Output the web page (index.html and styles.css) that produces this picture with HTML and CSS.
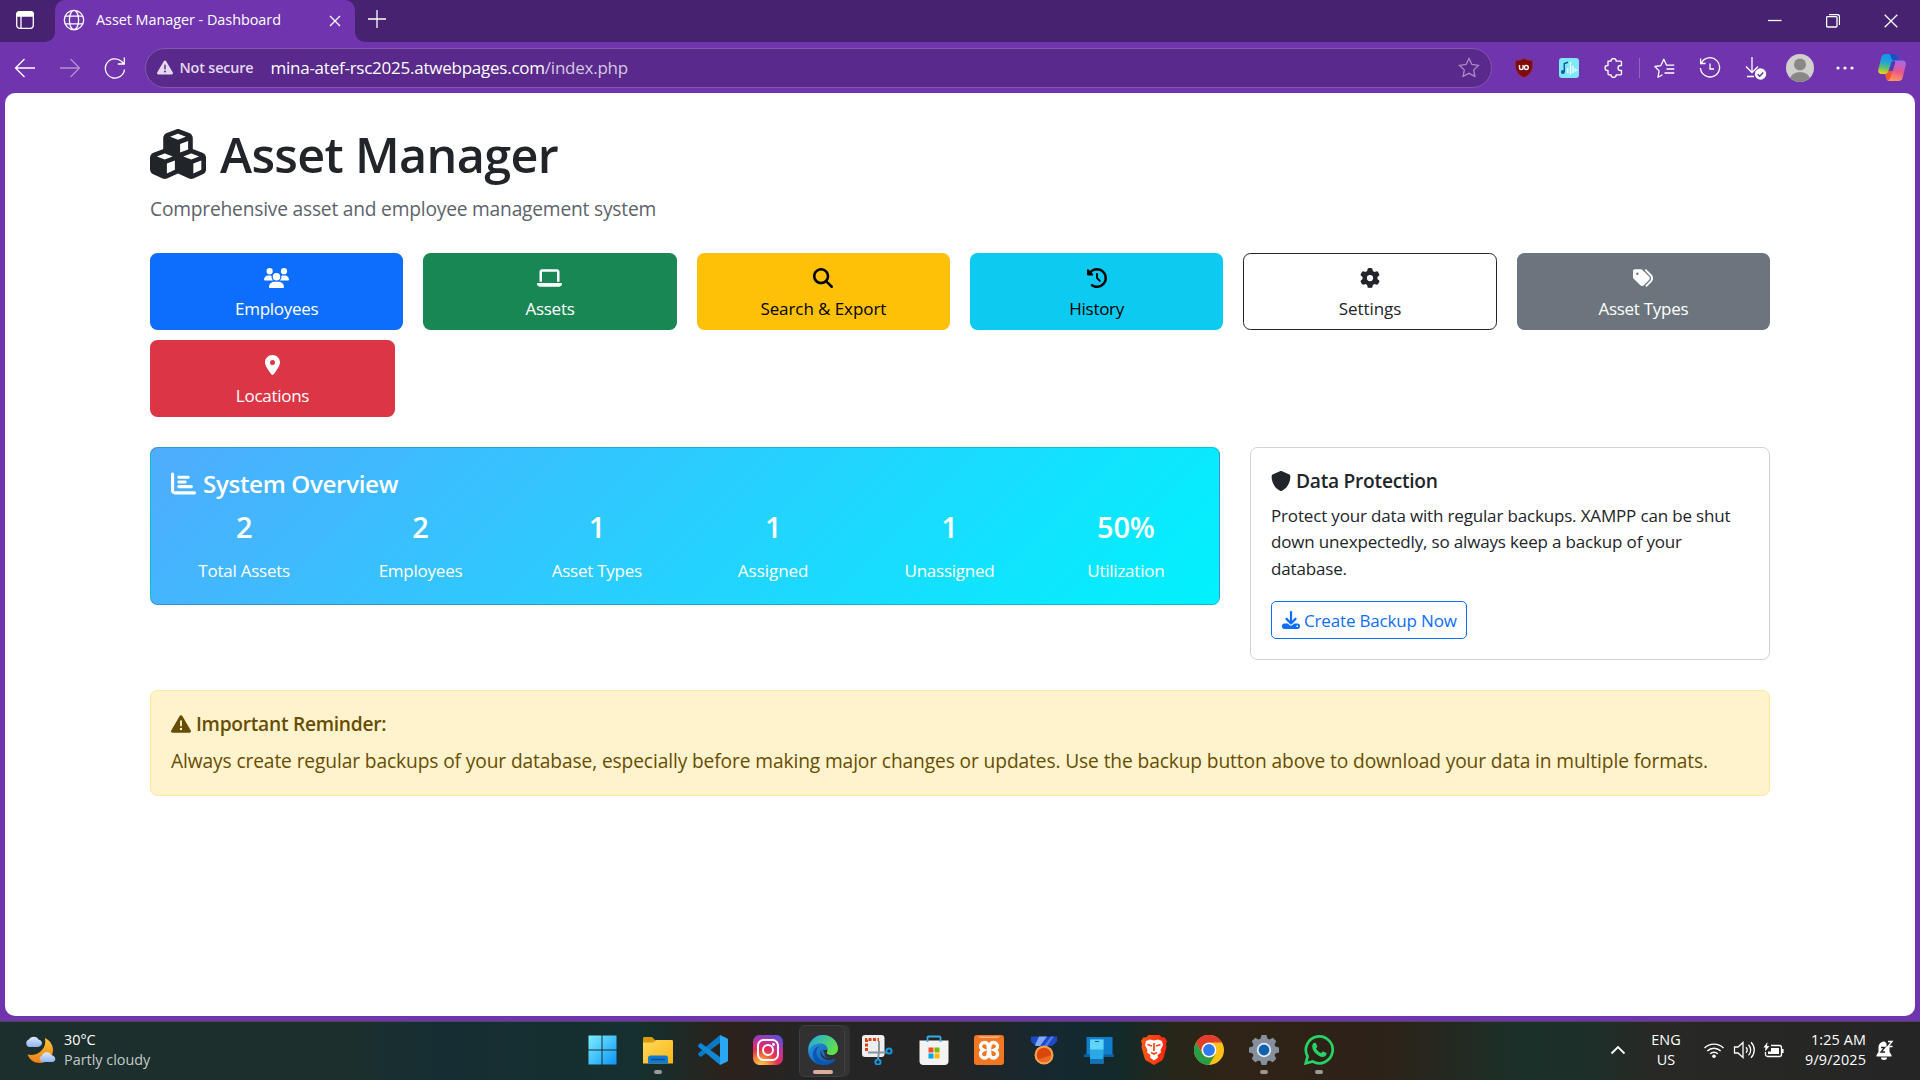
FILE: index.html
```html
<!DOCTYPE html>
<html lang="en">
<head>
<meta charset="utf-8">
<title>Asset Manager - Dashboard</title>
<link rel="stylesheet" href="styles.css">
</head>
<body>
<div class="screen">
  <header class="tabstrip">
    <div class="strip-left"><svg class="ic" width="20" height="20" viewBox="0 0 20 20"><rect x="1.7" y="1.7" width="16.600" height="16.600" rx="3"/><path d="M1.700 6V4.500a2.800 2.800 0 0 1 2.800-2.800h11a2.800 2.800 0 0 1 2.800 2.800V6z" fill="#fff"/><path d="M6 6v12"/></svg></div>
    <div class="tab">
      <svg class="ic" width="22" height="22" viewBox="0 0 22 22"><circle cx="11" cy="11" r="9.700"/><ellipse cx="11" cy="11" rx="4.600" ry="9.700"/><path d="M2.200 7.200h17.600M2.200 14.800h17.600"/></svg>
      <span class="tab-title">Asset Manager - Dashboard</span>
      <svg class="ic tab-close" width="12" height="12" viewBox="0 0 12 12"><path d="M1 1l10 10M11 1L1 11"/></svg>
    </div>
    <div class="strip-right">
      <svg class="ic" width="20" height="20" viewBox="0 0 20 20"><path d="M10 1v18M1 10h18"/></svg>
      <div class="winbtns">
        <span><svg class="ic" width="14" height="14" viewBox="0 0 14 14"><path d="M0 6.500h13.500"/></svg></span>
        <span><svg class="ic" width="14" height="14" viewBox="0 0 14 14"><rect x=".600" y="2.600" width="10.400" height="10.400" rx="1"/><path d="M3 .6h8.500a2 2 0 0 1 2 2V11"/></svg></span>
        <span><svg class="ic" width="14" height="14" viewBox="0 0 14 14"><path d="M.7.700l12.600 12.600M13.300.700L.700 13.300"/></svg></span>
      </div>
    </div>
  </header>
  <nav class="toolbar">
    <span class="tb"><svg class="ic" width="22" height="20" viewBox="0 0 22 20"><path d="M21 10H2M10.500 1L1.500 10l9 9"/></svg></span>
    <span class="tb dim"><svg class="ic" width="22" height="20" viewBox="0 0 22 20"><path d="M1 10h19M11.500 1l9 9-9 9"/></svg></span>
    <span class="tb"><svg class="ic" width="22" height="24" viewBox="0 0 22 24"><path d="M20.500 13.500A9.600 9.600 0 1 1 17.300 5.200L20.300 8M20.300 1.500V8h-6.500"/></svg></span>
    <div class="omnibox">
      <svg width="16" height="15" viewBox="0 0 512 470" fill="#e3d8ef"><path transform="translate(0 -22)" d="M256 32c14.200 0 27.300 7.500 34.500 19.800l216 368c7.300 12.400 7.300 27.700.2 40.100S486.300 480 472 480H40c-14.300 0-27.600-7.700-34.700-20.100s-7-27.800.2-40.100l216-368C228.700 39.500 241.800 32 256 32zm0 128c-13.300 0-24 10.700-24 24V296c0 13.300 10.700 24 24 24s24-10.700 24-24V184c0-13.300-10.700-24-24-24zm32 224a32 32 0 1 0-64 0 32 32 0 1 0 64 0z"/></svg>
      <span class="notsecure">Not secure</span>
      <span class="url">mina-atef-rsc2025.atwebpages.com<span class="path">/index.php</span></span>
      <svg class="ic star" width="22" height="21" viewBox="0 0 22 21"><path d="M11 1.500l2.900 6 6.600.9-4.800 4.500 1.200 6.500L11 16.300l-5.900 3.100 1.200-6.500L1.500 8.400l6.600-.9z"/></svg>
    </div>
    <div class="exts">
      <span class="tb"><svg width="18" height="20" viewBox="0 0 18 20"><path d="M9 .5C6.500 2 3.500 2.700.500 2.700c0 8 0 12.800 8.500 16.800 8.500-4 8.500-8.800 8.500-16.800C14.500 2.700 11.500 2 9 .500z" fill="#800b0b" stroke="#a02a2a" stroke-width=".5"/><path d="M4.500 7v2.800a1.800 1.800 0 0 0 3.600 0V7" fill="none" stroke="#fff" stroke-width="1.400"/><circle cx="11.300" cy="9.500" r="2" fill="none" stroke="#fff" stroke-width="1.400"/></svg></span>
      <span class="tb"><svg width="20" height="20" viewBox="0 0 20 20"><rect width="20" height="20" rx="3" fill="#7fe9fb"/><path d="M5.300 14V5.500l3.700-1.300" fill="none" stroke="#0b5d9c" stroke-width="1.500"/><circle cx="3.900" cy="14" r="2" fill="#0b5d9c"/><path d="M8.700 10v5M11.500 4v12.500M14 8v7M16.300 10.500v3M18 11.500v1.500" stroke="#fff" stroke-width="1.300"/></svg></span>
      <span class="tb"><svg class="ic" width="20" height="20" viewBox="0 0 20 20"><path d="M4 3.200H7a2.600 2.600 0 0 1 5.200 0h4.300q1 0 1 1v3.300h-1a2.500 2.500 0 0 0 0 5h1v3.300q0 1-1 1H12.200a2.600 2.600 0 0 1-5.200 0H5q-1 0-1-1v-3.300H3.500a2.500 2.500 0 0 1 0-5H4z" stroke-linejoin="round"/></svg></span>
      <span class="sep"></span>
      <span class="tb"><svg class="ic" width="21" height="20" viewBox="0 0 21 20"><path d="M8.500 16.800L4 19.200l1.100-6.300L.9 8.500l6-.9L9.800 1.300l2.800 5.900h7.700M12.500 11h7.800M10.500 15h9.800" stroke-linejoin="round"/></svg></span>
      <span class="tb"><svg class="ic" width="22" height="22" viewBox="0 0 22 22"><path d="M2.300 6.200A9.600 9.600 0 1 1 1.400 11M1.600 1.500v5h5M11 6.500V12h4"/></svg></span>
      <span class="tb"><svg class="ic" width="24" height="24" viewBox="0 0 24 24"><path d="M9 1v15M3 10.500l6 6 6-6M4 20.500h7"/><circle cx="17.500" cy="18" r="5.700" fill="#fff" stroke="none"/><path d="M14.700 18.200l2 2 3.600-3.800" stroke="#6a30a8" stroke-width="1.500"/></svg></span>
      <span class="tb"><svg width="28" height="28" viewBox="0 0 28 28"><clipPath id="av"><circle cx="14" cy="14" r="14"/></clipPath><g clip-path="url(#av)"><path fill="#d2d0ce" d="M0 0h28v28H0z"/><circle cx="14" cy="10.500" r="6" fill="#8a8886"/><ellipse cx="14" cy="25.500" rx="10" ry="7.500" fill="#8a8886"/></g></svg></span>
      <span class="tb"><svg width="18" height="4" viewBox="0 0 18 4" fill="#fff"><circle cx="2" cy="2" r="1.600"/><circle cx="9" cy="2" r="1.600"/><circle cx="16" cy="2" r="1.600"/></svg></span>
      <span class="tb copilot"><svg width="28" height="27" viewBox="0 0 28 27"><defs><linearGradient id="c1" x1=".5" y1="0" x2=".3" y2="1"><stop offset="0" stop-color="#1592ea"/><stop offset=".4" stop-color="#1fa3dc"/><stop offset=".7" stop-color="#5cc06a"/><stop offset="1" stop-color="#f2cf1c"/></linearGradient><linearGradient id="c2" x1=".6" y1="0" x2=".4" y2="1"><stop offset="0" stop-color="#a66be8"/><stop offset=".5" stop-color="#e8568f"/><stop offset="1" stop-color="#fd9a57"/></linearGradient></defs><path d="M7 0h9.500c2 0 2.800 1.300 3.300 3l1 3.500h-4.300c-2 0-3 1-3.600 3L10.500 17c-.5 1.700-1.500 3-3.500 3H3.500C.8 20-.3 18 .3 15.500l3-12C3.900 1.300 5 0 7 0z" fill="url(#c1)"/><path d="M12 0h4.500c2 0 2.800 1.300 3.300 3l1 3.500h-4.300L14 6z" fill="#1b4fc4"/><path d="M21 27h-9.500c-2 0-2.800-1.300-3.300-3l-.9-4c2 0 2.900-1.300 3.400-3l2.300-7.500c.6-2 1.500-3 3.500-3h8c2.700 0 3.800 2 3.200 4.500l-3 12.500C24.100 25.700 23 27 21 27z" fill="url(#c2)"/><path d="M16.500 6.500c-2 0-3 1-3.500 3L10.700 17h4L17 9.500c.5-1.500 0-3-.5-3z" fill="#4a3fb8"/><path d="M7.300 20c2 0 3-1.300 3.500-3h3.700L13 22c-.9 3-2 4.500-3.500 4-.7-.5-1-1.200-1.300-2z" fill="#f4552f"/></svg></span>
    </div>
  </nav>

  <main class="page">
    <h1><svg width="56" height="50" viewBox="0 0 576 512"><path d="M290.8 48.600l78.400 29.700L288 109.500 206.800 78.300l78.400-29.700c1.800-.7 3.800-.7 5.700 0zM136 92.500V204.700c-1.300.4-2.600.8-3.900 1.300l-96 36.400C14.400 250.600 0 271.500 0 294.700V413.900c0 22.200 13.100 42.300 33.500 51.300l96 42.200c14.400 6.300 30.700 6.300 45.100 0L288 457.500l113.500 49.900c14.400 6.300 30.700 6.300 45.100 0l96-42.200c20.300-8.900 33.500-29.100 33.500-51.300V294.700c0-23.300-14.400-44.100-36.100-52.400l-96-36.400c-1.300-.5-2.600-.9-3.900-1.300V92.500c0-23.300-14.400-44.100-36.100-52.400l-96-36.400c-12.800-4.800-26.900-4.800-39.700 0l-96 36.400C150.400 48.400 136 69.300 136 92.500zM392 210.600l-82.400 31.200V152.600L392 121v89.600zM154.800 250.900l78.400 29.700L152 311.700 70.800 280.600l78.400-29.700c1.800-.7 3.800-.7 5.700 0zm18.800 204.400V354.800L256 323.200v95.900l-82.400 36.200zM421.200 250.900c1.800-.7 3.800-.7 5.700 0l78.400 29.700L424 311.700l-81.200-31.100 78.400-29.700zM523.200 421.200l-77.600 34.100V354.800L528 323.200v90.700c0 3.200-1.900 6-4.800 7.300z"/></svg><span>Asset Manager</span></h1>
    <p class="lead">Comprehensive asset and employee management system</p>

    <div class="actions">
      <a class="btn blue"><svg width="25" height="20" viewBox="0 0 640 512"><path d="M144 0a80 80 0 1 1 0 160A80 80 0 1 1 144 0zM512 0a80 80 0 1 1 0 160A80 80 0 1 1 512 0zM0 298.700C0 239.800 47.800 192 106.700 192h42.700c15.900 0 31 3.500 44.600 9.700c-1.300 7.200-1.900 14.700-1.900 22.300c0 38.200 16.800 72.500 43.300 96H21.300C9.600 320 0 310.400 0 298.700zM405.300 320h-.7c26.600-23.500 43.300-57.800 43.300-96c0-7.600-.7-15-1.900-22.300c13.600-6.300 28.700-9.700 44.600-9.700h42.700C592.200 192 640 239.800 640 298.700c0 11.800-9.600 21.300-21.300 21.300H405.300zM224 224a96 96 0 1 1 192 0 96 96 0 1 1-192 0zM128 485.300C128 411.700 187.700 352 261.300 352H378.700C452.300 352 512 411.700 512 485.300c0 14.700-11.900 26.700-26.700 26.700H154.700c-14.700 0-26.700-11.900-26.700-26.700z"/></svg><span>Employees</span></a>
      <a class="btn green"><svg width="25" height="20" viewBox="0 0 640 512"><path d="M128 32C92.700 32 64 60.700 64 96V352h64V96H512V352h64V96c0-35.300-28.700-64-64-64H128zM19.200 384C8.600 384 0 392.600 0 403.200C0 445.600 34.400 480 76.800 480H563.200c42.400 0 76.800-34.400 76.800-76.800c0-10.600-8.600-19.200-19.200-19.200H19.200z"/></svg><span>Assets</span></a>
      <a class="btn yellow"><svg width="20" height="20" viewBox="0 0 512 512"><path d="M416 208c0 45.900-14.900 88.300-40 122.700L502.600 457.400c12.500 12.500 12.500 32.800 0 45.300s-32.800 12.500-45.300 0L330.700 376c-34.400 25.200-76.800 40-122.700 40C93.100 416 0 322.900 0 208S93.100 0 208 0S416 93.100 416 208zM208 352a144 144 0 1 0 0-288 144 144 0 1 0 0 288z"/></svg><span class="roomy">Search &amp; Export</span></a>
      <a class="btn cyan"><svg width="20" height="20" viewBox="0 0 512 512"><path d="M75 75L41 41C25.900 25.900 0 36.600 0 57.900V168c0 13.300 10.700 24 24 24H134.100c21.400 0 32.100-25.900 17-41l-30.800-30.800C155 85.500 203 64 256 64c106 0 192 86 192 192s-86 192-192 192c-40.800 0-78.600-12.700-109.700-34.400c-14.500-10.100-34.400-6.600-44.600 7.900s-6.600 34.400 7.900 44.600C151.200 495 201.700 512 256 512c141.400 0 256-114.600 256-256S397.400 0 256 0C185.300 0 121.300 28.700 75 75zm181 53c-13.300 0-24 10.700-24 24V256c0 6.400 2.500 12.500 7 17l72 72c9.400 9.400 24.600 9.400 33.900 0s9.400-24.600 0-33.900l-65-65V152c0-13.300-10.700-24-24-24z"/></svg><span>History</span></a>
      <a class="btn outline"><svg width="20" height="20" viewBox="0 0 512 512"><path d="M495.900 166.600c3.200 8.700.5 18.400-6.400 24.600l-43.300 39.400c1.100 8.300 1.700 16.800 1.700 25.400s-.6 17.100-1.700 25.400l43.300 39.400c6.900 6.200 9.600 15.900 6.400 24.600c-4.400 11.900-9.700 23.300-15.800 34.300l-4.700 8.100c-6.600 11-14 21.400-22.100 31.200c-5.900 7.200-15.700 9.600-24.500 6.800l-55.700-17.700c-13.400 10.300-28.200 18.900-44 25.400l-12.500 57.100c-2 9.100-9 16.300-18.200 17.800c-13.800 2.300-28 3.500-42.500 3.500s-28.700-1.200-42.500-3.500c-9.200-1.500-16.200-8.700-18.200-17.800l-12.500-57.100c-15.800-6.500-30.600-15.100-44-25.400L83.100 425.900c-8.800 2.800-18.600.3-24.500-6.800c-8.100-9.800-15.500-20.200-22.100-31.200l-4.700-8.100c-6.100-11-11.400-22.400-15.800-34.300c-3.200-8.700-.5-18.400 6.400-24.600l43.300-39.400C64.600 273.100 64 264.600 64 256s.6-17.100 1.700-25.400L22.400 191.200c-6.900-6.200-9.600-15.900-6.400-24.600c4.400-11.900 9.700-23.300 15.800-34.300l4.700-8.100c6.600-11 14-21.400 22.100-31.200c5.900-7.200 15.700-9.600 24.500-6.800l55.700 17.700c13.400-10.300 28.200-18.900 44-25.400l12.500-57.100c2-9.100 9-16.300 18.200-17.800C227.300 1.200 241.500 0 256 0s28.700 1.200 42.500 3.500c9.200 1.500 16.200 8.700 18.200 17.800l12.500 57.100c15.800 6.500 30.600 15.100 44 25.400l55.700-17.700c8.800-2.800 18.600-.3 24.500 6.800c8.100 9.800 15.500 20.200 22.100 31.200l4.700 8.100c6.100 11 11.400 22.400 15.800 34.300zM256 336a80 80 0 1 0 0-160 80 80 0 1 0 0 160z"/></svg><span class="roomy">Settings</span></a>
      <a class="btn gray"><svg width="20" height="20" viewBox="0 0 512 512"><path d="M345 39.100L472.800 168.400c52.400 53 52.400 138.200 0 191.200L360.800 472.900c-9.300 9.400-24.500 9.500-33.900.2s-9.500-24.500-.2-33.900L438.600 325.900c33.900-34.300 33.900-89.400 0-123.700L310.900 72.900c-9.300-9.400-9.200-24.600.2-33.900s24.600-9.200 33.900.2zM0 229.500V80C0 53.500 21.500 32 48 32H197.500c17 0 33.300 6.700 45.300 18.700l168 168c25 25 25 65.500 0 90.500L277.300 442.700c-25 25-65.500 25-90.500 0l-168-168C6.700 262.700 0 246.500 0 229.500zM144 144a32 32 0 1 0-64 0 32 32 0 1 0 64 0z"/></svg><span>Asset Types</span></a>
      <a class="btn red"><svg width="15" height="20" viewBox="0 0 384 512"><path d="M215.700 499.200C267 435 384 279.400 384 192C384 86 298 0 192 0S0 86 0 192c0 87.400 117 243 168.300 307.200c12.300 15.300 35.100 15.300 47.400 0zM192 128a64 64 0 1 1 0 128 64 64 0 1 1 0-128z"/></svg><span>Locations</span></a>
    </div>

    <div class="panels">
      <section class="overview">
        <h2><svg width="25" height="25" viewBox="0 0 512 512"><path d="M32 32c17.700 0 32 14.300 32 32V400c0 8.800 7.200 16 16 16H480c17.700 0 32 14.300 32 32s-14.300 32-32 32H80c-44.200 0-80-35.800-80-80V64C0 46.300 14.300 32 32 32zm96 96c0-17.700 14.300-32 32-32l192 0c17.700 0 32 14.300 32 32s-14.300 32-32 32l-192 0c-17.700 0-32-14.300-32-32zm32 64H288c17.700 0 32 14.300 32 32s-14.300 32-32 32H160c-17.700 0-32-14.300-32-32s14.300-32 32-32zm0 96H416c17.700 0 32 14.300 32 32s-14.300 32-32 32H160c-17.700 0-32-14.300-32-32s14.300-32 32-32z"/></svg><span>System Overview</span></h2>
        <div class="stats">
          <div><b>2</b><span>Total Assets</span></div>
          <div><b>2</b><span>Employees</span></div>
          <div><b>1</b><span>Asset Types</span></div>
          <div><b>1</b><span class="roomy">Assigned</span></div>
          <div><b>1</b><span>Unassigned</span></div>
          <div><b>50%</b><span>Utilization</span></div>
        </div>
      </section>
      <section class="protect">
        <h3><svg width="20" height="20" viewBox="0 0 512 512"><path d="M256 0c4.600 0 9.200 1 13.400 2.900L457.700 82.800c22 9.300 38.400 31 38.300 57.200c-.5 99.200-41.300 280.700-213.600 363.200c-16.700 8-36.100 8-52.800 0C57.300 420.700 16.500 239.200 16 140c-.1-26.200 16.300-47.900 38.300-57.200L242.700 2.900C246.800 1 251.400 0 256 0z"/></svg><span>Data Protection</span></h3>
        <p>Protect your data with regular backups. XAMPP can be shut<br>down unexpectedly, so always keep a backup of your<br>database.</p>
        <a class="backup"><svg width="18" height="18" viewBox="0 0 512 512"><path d="M288 32c0-17.700-14.300-32-32-32s-32 14.300-32 32V274.700l-73.400-73.400c-12.500-12.500-32.800-12.500-45.300 0s-12.500 32.800 0 45.300l128 128c12.500 12.500 32.800 12.500 45.300 0l128-128c12.500-12.500 12.500-32.800 0-45.300s-32.800-12.500-45.300 0L288 274.700V32zM64 352c-35.300 0-64 28.700-64 64v32c0 35.300 28.700 64 64 64H448c35.300 0 64-28.700 64-64V416c0-35.300-28.700-64-64-64H346.500l-45.300 45.300c-25 25-65.500 25-90.500 0L165.500 352H64zm368 56a24 24 0 1 1 0 48 24 24 0 1 1 0-48z"/></svg><span>Create Backup Now</span></a>
      </section>
    </div>

    <section class="alert">
      <h3><svg width="20" height="20" viewBox="0 0 512 512"><path d="M256 32c14.200 0 27.300 7.500 34.500 19.800l216 368c7.300 12.400 7.300 27.700.2 40.100S486.300 480 472 480H40c-14.300 0-27.600-7.700-34.700-20.100s-7-27.800.2-40.100l216-368C228.700 39.500 241.800 32 256 32zm0 128c-13.300 0-24 10.700-24 24V296c0 13.300 10.700 24 24 24s24-10.700 24-24V184c0-13.300-10.700-24-24-24zm32 224a32 32 0 1 0-64 0 32 32 0 1 0 64 0z"/></svg><span>Important Reminder:</span></h3>
      <p>Always create regular backups of your database, especially before making major changes or updates. Use the backup button above to download your data in multiple formats.</p>
    </section>
  </main>

  <footer class="taskbar">
    <div class="weather">
      <svg width="31" height="30" viewBox="0 0 31 30"><defs><linearGradient id="w1" x1="0" y1="0" x2="0" y2="1"><stop offset="0" stop-color="#fbc53a"/><stop offset="1" stop-color="#ee7d15"/></linearGradient><linearGradient id="w2" x1="0" y1="0" x2="0" y2="1"><stop offset="0" stop-color="#dfeafc"/><stop offset="1" stop-color="#8fb4f0"/></linearGradient></defs><path d="M20 3c5 2.500 8 7 8 12 0 8-6 13-13 13-6 0-10.500-3.500-12.500-8.500 4 1 9 .500 12.500-2.500 4.500-3.500 6-8.500 5-14z" fill="url(#w1)"/><path d="M4 12a4 4 0 0 1 0-7.600C5.500 1 12 .500 13.500 4.500c4 .5 5.500 6-.5 7.500z" fill="url(#w2)"/><path d="M17 27a3.500 3.500 0 0 1 0-6.500c1.500-4 7.500-4.500 9-.500 5 .5 6 6.500 1 7z" fill="url(#w2)"/></svg>
      <div><span>30°C</span><span class="muted">Partly cloudy</span></div>
    </div>
    <div class="apps">
      <span><svg width="30" height="30" viewBox="0 0 30 30"><defs><linearGradient id="wi" x1="0" y1="0" x2="1" y2="1"><stop offset="0" stop-color="#7bf0ff"/><stop offset="1" stop-color="#0d93f8"/></linearGradient></defs><path fill="url(#wi)" d="M1.500.5h13v14h-13zM15.500.5h14v14h-14zM1.500 15.500h13v14h-13zM15.500 15.500h14v14h-14z"/></svg></span>
      <span class="run"><svg width="30" height="30" viewBox="0 0 30 30"><defs><linearGradient id="fo" x1="0" y1="0" x2="1" y2="1"><stop offset="0" stop-color="#ffd95c"/><stop offset="1" stop-color="#fbb514"/></linearGradient></defs><path d="M0 9V3.500C0 2.500.500 2 1.500 2H9l3.500 3.500V9z" fill="#d99a0b"/><path d="M0 7.500h10L13 5h15.500c1 0 1.500.5 1.500 1.500v22H0z" fill="url(#fo)"/><path d="M5 28.500V23c0-1.500 1-2.500 2.500-2.500h15c1.500 0 2.500 1 2.500 2.500v5.500z" fill="#0f7ad3"/><path d="M8 24.500h14" stroke="#0a4f96" stroke-width="1.500"/></svg></span>
      <span><svg width="30" height="30" viewBox="0 0 30 30"><path d="M22 0v8L3.500 21.500c-.7.500-1.200.400-1.700 0L.500 20c-.6-.6-.6-1.500 0-2z" fill="#0a78c4"/><path d="M22 30v-8L3.500 8.500c-.7-.5-1.200-.4-1.700 0L.500 10c-.6.600-.6 1.500 0 2z" fill="#1187d6"/><path d="M22 0l7 3.200c.7.300 1 .8 1 1.500v20.600c0 .7-.3 1.200-1 1.500L22 30z" fill="#2aa7f2"/></svg></span>
      <span><svg width="30" height="30" viewBox="0 0 30 30"><defs><radialGradient id="ig" cx=".25" cy="1.050" r="1.150"><stop offset="0" stop-color="#ffd55a"/><stop offset=".25" stop-color="#fb8a3a"/><stop offset=".5" stop-color="#e8304f"/><stop offset=".75" stop-color="#c32f9c"/><stop offset="1" stop-color="#5b4fd8"/></radialGradient></defs><rect width="30" height="30" rx="6.500" fill="url(#ig)"/><g fill="none" stroke="#fff" stroke-width="2"><rect x="5" y="5" width="20" height="20" rx="5.500"/><circle cx="15" cy="15" r="5"/></g><circle cx="20.500" cy="9.500" r="1.400" fill="#fff"/></svg></span>
      <span class="active"><svg width="30" height="30" viewBox="0 0 30 30"><defs><linearGradient id="e1" x1="0" y1="0" x2="1" y2=".5"><stop offset="0" stop-color="#22a6e8"/><stop offset="1" stop-color="#5fe04a"/></linearGradient><linearGradient id="e2" x1="0" y1="0" x2="1" y2="1"><stop offset="0" stop-color="#2aa0e6"/><stop offset="1" stop-color="#0b4aa8"/></linearGradient></defs><circle cx="15" cy="15" r="15" fill="url(#e2)"/><path d="M15 15h15v6.500l-3 2.500-9-2z" fill="#313131"/><path d="M1 11C3 4.500 8.500 0 15 0c9 0 15 6.500 15 13.500 0 4-3 6.500-6.500 6.500-3 0-5.500-1-4.500-3 2-4-1-8.500-6-8.500C8 8.500 3 10 1 15z" fill="url(#e1)"/><path d="M12 11c-5 3-4.500 10 0 13.500 4.500 3.500 10.500 3 16 0C25.500 28 21 30 16 30 9 30 4.500 25 5 18.500 5.500 14 8.500 11.500 12 11z" fill="#0a56b5"/><path d="M13.500 14c-1.500 4 1.500 8.500 6.500 9 3 .3 5.500-.8 8-1.800-.5 1.500-.8 2-1.500 2.500-5.500 2.500-11.500 1.300-13.500-3.200-1-2.500-.7-5 .5-6.500z" fill="#313131"/></svg></span>
      <span><svg width="32" height="30" viewBox="0 0 32 30"><rect width="22.500" height="22" rx="3" fill="#eceef0"/><path d="M4.500 16V4.500H17" fill="none" stroke="#d8400c" stroke-width="3" stroke-dasharray="3 1.500"/><path d="M17 6v11M6 17.500h18M17 17l-1 7" stroke="#8b949b" stroke-width="2" fill="none"/><g fill="none" stroke="#1597dd" stroke-width="2"><circle cx="27" cy="16" r="2.600"/><circle cx="16" cy="27" r="2.600"/></g></svg></span>
      <span><svg width="30" height="30" viewBox="0 0 30 30"><path d="M.5 5.500h29V26a4 4 0 0 1-4 4h-21a4 4 0 0 1-4-4z" fill="#f3f3f3"/><path d="M8.500 7V2.500c0-.6.400-1 1-1h11c.6 0 1 .4 1 1V7" fill="none" stroke="#2bb2ea" stroke-width="1.800"/><path fill="#f25022" d="M9.500 12.500h5v5h-5z"/><path fill="#7fba00" d="M15.500 12.500h5v5h-5z"/><path fill="#00a4ef" d="M9.500 18.500h5v5h-5z"/><path fill="#ffb900" d="M15.500 18.500h5v5h-5z"/></svg></span>
      <span><svg width="30" height="30" viewBox="0 0 30 30"><rect width="30" height="30" rx="3" fill="#f37623"/><path d="M4 1.500h22l-2 1.500H6z" fill="#fbb98a"/><path d="M7 9.500C8.500 7 12 6.800 13.500 9s0 5 1.500 5 0-2.800 1.500-5 5-2 6.500.5 0 4.500-2.500 5.500c2.500 1 4 3.500 2.500 6s-5 2.700-6.500.5 0-5-1.500-5 0 2.800-1.500 5-5 2-6.500-.5 0-5 2.500-6C7 14 5.500 12 7 9.500z" fill="none" stroke="#fff" stroke-width="3.400"/></svg></span>
      <span><svg width="30" height="30" viewBox="0 0 30 30"><path d="M2 1.500h26v5L23 11H7L2 6.500z" fill="#1d49c9"/><path d="M10 1.500h8L11 11H7l-1-1z" fill="#7fa8f5"/><path d="M22 1.500h3L18 11h-3z" fill="#4b7bea"/><circle cx="15" cy="20" r="9.500" fill="#f7a24a"/><circle cx="15" cy="20" r="7.300" fill="#d9480a"/><path d="M9.500 24.500a7.300 7.300 0 0 0 12.800-4.500z" fill="#ee6b25"/></svg></span>
      <span><svg width="30" height="30" viewBox="0 0 30 30"><path d="M2.500 2h26v18h-26z" fill="#0f7fcd"/><path d="M0 19.500h30V22H0z" fill="#0b5f9e"/><path d="M6 4.500h13.500v24H6z" fill="#2aa9e6"/><path d="M6 4.500h13.500v10H6z" fill="#5fd4f5"/><path d="M6 24h13.500v4.500H6z" fill="#1172b8"/><path d="M11 6.500h4" stroke="#0b5f9e"/></svg></span>
      <span><svg width="26" height="30" viewBox="0 0 26 30"><defs><linearGradient id="br"><stop offset="0" stop-color="#ff5a17"/><stop offset="1" stop-color="#ff2410"/></linearGradient></defs><path d="M7.500 0h11L21 2.500l2.500-.2L26 6l-1 3 .5 3-3 11c-.4 1.300-1.200 2-2 2.700L13 30l-7.500-4.300c-1-.7-1.600-1.400-2-2.700L.5 12 1 9 0 6l2.500-3.700 2.500.2z" fill="url(#br)"/><path d="M13 5.500l4-1 4 1.500 1 4-2.500 5 .5 2.500-3.500 2.500.5 2.500-4 3-4-3 .5-2.500L6 17.500l.5-2.500L4 10l1-4 4-1.500z" fill="#fff"/><path d="M6.500 9.500l4.500 1.500M19.500 9.500L15 11M13 8v8M10 17.500l3 1.500 3-1.500" fill="none" stroke="#ff4416" stroke-width="1.700"/></svg></span>
      <span><svg width="30" height="30" viewBox="0 0 30 30"><circle cx="15" cy="15" r="15" fill="#fbc116"/><path d="M2 7.500A15 15 0 0 1 28 7.500H15a7.500 7.500 0 0 0-6.800 10.700z" fill="#e33b2e"/><path d="M2 7.500l6.500 11.300A7.500 7.500 0 0 0 18 21.900l3.500-3L15 30A15 15 0 0 1 2 7.500z" fill="#2a9c48"/><circle cx="15" cy="15" r="7.300" fill="#fff"/><circle cx="15" cy="15" r="5.900" fill="#3079ee"/></svg></span>
      <span class="run"><svg width="30" height="30" viewBox="0 0 512 512"><path fill="#84909b" d="M512 215v82l-62 20-14 32 30 58-59 59-58-30-32 14-20 62h-82l-20-62-32-14-58 30-59-59 30-58-14-32-62-20v-82l62-20 14-32-30-58 59-59 58 30 32-14 20-62h82l20 62 32 14 58-30 59 59-30 58 14 32z"/><circle cx="256" cy="256" r="122" fill="#e8edf2"/><circle cx="256" cy="256" r="92" fill="#0f62ad"/></svg></span>
      <span class="run"><svg width="30" height="30" viewBox="0 0 30 30"><path d="M1.700 28.300l1.900-6.900A13.400 13.400 0 1 1 8.700 26.500z" fill="none" stroke="#25d366" stroke-width="2.700"/><path d="M8.200 11.500c0-2 1.300-3.700 2.500-3.700 1 0 1.200.2 1.500 1l1 2.400c.3.800-.7 1.600-1.200 2.300.8 1.800 2.700 3.500 5 4.500.8-.4 1.300-1.800 2.200-1.600l2.800 1.400c.7.400.6 1 .4 1.700-.4 1.500-2 2.500-3.600 2.500-4.500-.4-10.600-5.500-10.600-10.500z" fill="#25d366"/></svg></span>
    </div>
    <div class="tray">
      <svg class="ic" width="16" height="10" viewBox="0 0 16 10"><path d="M1.500 8.500L8 2l6.500 6.500" stroke-width="1.800"/></svg>
      <div class="lang"><span>ENG</span><span>US</span></div>
      <svg class="ic wifi" width="22" height="18" viewBox="0 0 22 18"><path d="M1.500 7a13.500 13.500 0 0 1 19 0M4.300 10a9.500 9.500 0 0 1 13.400 0M7.200 12.800a5.500 5.500 0 0 1 7.600 0" stroke-width="1.400"/><circle cx="11" cy="15.300" r="1.800" fill="#fff" stroke="none"/></svg>
      <svg class="ic vol" width="22" height="18" viewBox="0 0 22 18"><path d="M1.500 6v6h3.500l5 4.500v-15L5 6zM13 6.300a4 4 0 0 1 0 5.400M15.500 3.700a7.500 7.500 0 0 1 0 10.600M18 1.200a11 11 0 0 1 0 15.600"/></svg>
      <svg class="ic bat" width="22" height="18" viewBox="0 0 22 18"><path d="M8 4.500h8.500a2 2 0 0 1 2 2v7a2 2 0 0 1-2 2h-12a2 2 0 0 1-2-2V11"/><path d="M8 7h8v6H5v-2.500h3z" fill="#fff" stroke="none"/><path d="M19.500 8v4" stroke-width="2.200"/><path d="M4.500 1L.5 6.500h2L2 10.500 6.500 5H4z" fill="#fff" stroke="none"/></svg>
      <div class="clock"><span>1:25 AM</span><span>9/9/2025</span></div>
      <svg width="18" height="20" viewBox="0 0 18 20"><path d="M8.500 1.500C5 1.500 2.500 4 2.500 7.500V12L.5 15v1.500h15V15l-2-3V6z" fill="#fff"/><path d="M5 17.500h6a3 2.500 0 0 1-6 0z" fill="#fff"/><path d="M5 7.500h3.700l-3.700 4.500h4" fill="none" stroke="#262624" stroke-width="1.400"/><path d="M10.500 1.200h6.500v5.500h-6.500z" fill="#262624"/><path d="M12 1.500h4L12 6.500h4.500" fill="none" stroke="#fff" stroke-width="1.400"/></svg>
    </div>
  </footer>
</div>
</body>
</html>
```
FILE: styles.css
```css
* { box-sizing: border-box; }
body { margin: 0; font-family: "Open Sans", "Noto Sans", sans-serif; }
h1, h2, h3, p { margin: 0; }
svg { display: block; flex: none; }
.ic { fill: none; stroke: #fff; stroke-width: 1.3; }
.screen { width: 1920px; height: 1080px; overflow: hidden; display: flex; flex-direction: column; background: #7035ae; }

.tabstrip { display: flex; height: 42px; background: linear-gradient(#472270 50%, #7035ae 50%); }
.strip-left { width: 55px; padding: 10px 0 0 15px; background: #472270; border-bottom-right-radius: 10px; }
.tab { width: 300px; display: flex; align-items: center; padding: 0 14px 3px 8px; background: #7035ae; border-radius: 10px 10px 0 0; color: #fff; font-size: 14.400px; letter-spacing: -.03px; }
.tab-title { margin-left: 11px; white-space: nowrap; }
.tab-close { margin: 2px 0 0 auto; }
.strip-right { flex: 1; display: flex; justify-content: space-between; padding: 9px 0 0 12px; background: #472270; border-bottom-left-radius: 10px; }
.winbtns { display: flex; }
.winbtns span { width: 58px; display: flex; justify-content: center; padding-top: 5px; }

.toolbar { display: flex; align-items: center; height: 51px; padding: 0 8px 0 2.500px; }
.tb { width: 45px; display: flex; justify-content: center; }
.dim { opacity: .45; }
.omnibox { width: 1347.500px; height: 40px; margin: 0 9px 0 7.500px; display: flex; align-items: center; padding: 0 11px; border: 1px solid #8059ae; border-radius: 20px; background: #592a8b; white-space: nowrap; }
.notsecure { margin-left: 6.500px; color: #e3d8ef; font-size: 14.400px; font-weight: 600; letter-spacing: -.16px; }
.url { margin-left: 17px; color: #fff; font-size: 17px; letter-spacing: -.24px; }
.path { color: #d5c8e4; }
.star { margin-left: auto; stroke: #a98bc9; }
.exts { display: flex; align-items: center; }
.sep { width: 1px; height: 20px; margin: 0 2.500px; background: #9164c2; }
.copilot { padding-left: 4px; }

.page { flex: none; width: 1910px; height: 923px; margin: 0 5px; padding: 31px 145px 0; background: #fff; border-radius: 10px; color: #212529; }
h1 { display: flex; align-items: center; height: 60px; font-size: 48.500px; font-weight: 600; line-height: 60px; letter-spacing: -.66px; white-space: nowrap; }
h1 svg { margin-right: 14px; }
.page svg { fill: currentColor; }
.lead { margin-top: 10px; font-size: 19.200px; line-height: 30px; letter-spacing: -.207px; color: #5c636a; white-space: nowrap; }

.actions { display: grid; grid-template-columns: repeat(6, 1fr); gap: 10px 20px; margin-top: 29px; font-size: 17px; }
.btn { height: 77px; padding-top: 14.500px; display: flex; flex-direction: column; align-items: center; border-radius: 7.500px; line-height: 26px; letter-spacing: -.28px; color: #fff; }
.btn span { margin-top: 8px; }
.btn .roomy { letter-spacing: -.08px; }
.blue { background: #0d6efd; }
.green { background: #198754; }
.yellow { background: #ffc107; color: #000; }
.cyan { background: #0dcaf0; color: #000; }
.outline { padding-top: 13.500px; border: 1px solid #212529; color: #212529; }
.gray { background: #6c757d; }
.red { width: 245px; background: #dc3545; }

.panels { display: grid; grid-template-columns: 1070px 520px; gap: 30px; align-items: start; margin-top: 30px; }
.overview { height: 158px; padding: 20px 5px; border: 1px solid rgba(0,0,0,.175); border-radius: 7.500px; background: linear-gradient(135deg, #4facfe 0%, #00f2fe 100%); color: #fff; }
.overview h2 { display: flex; align-items: center; height: 30px; padding-left: 15px; font-size: 24.200px; font-weight: 600; letter-spacing: -.37px; white-space: nowrap; }
.overview h2 svg { margin-right: 7px; }
.stats { display: grid; grid-template-columns: repeat(6, 1fr); text-align: center; }
.stats div { display: flex; flex-direction: column; align-items: center; }
.stats b { height: 46px; line-height: 58px; font-size: 29px; font-weight: 600; letter-spacing: -.24px; }
.stats span { line-height: 26px; margin-top: 14px; font-size: 17px; letter-spacing: -.24px; }
.stats .roomy { letter-spacing: -.03px; }
.protect { height: 213px; padding: 20px; border: 1px solid rgba(0,0,0,.175); border-radius: 7.500px; font-size: 17px; letter-spacing: -.165px; }
h3 { display: flex; align-items: center; gap: 5px; height: 25px; font-size: 19.200px; font-weight: 600; letter-spacing: -.265px; white-space: nowrap; }
.protect p { margin-top: 10px; line-height: 26.250px; white-space: nowrap; }
.backup { display: flex; align-items: center; gap: 4px; width: 196px; height: 38px; margin-top: 19px; padding: 1px 10px 0; border: 1px solid #0d6efd; border-radius: 5px; color: #0d6efd; white-space: nowrap; }

.alert { height: 106px; margin-top: 30px; padding: 20px; border: 1px solid #ffe69c; border-radius: 7.500px; background: #fff3cd; color: #664d03; }
.alert p { margin-top: 10px; font-size: 19.200px; line-height: 30px; letter-spacing: -.12px; white-space: nowrap; }

.taskbar { flex: none; display: flex; align-items: center; height: 59px; margin-top: 5px; padding-bottom: 2px; border-top: 1px solid #4b474e; color: #fff; font-size: 14.400px; line-height: 20px; white-space: nowrap;
  background: linear-gradient(90deg, #1c2f2c 0, #1c2f2c 340px, #162e33 440px, #15302e 640px, #2c211b 730px, #252525 800px, #242424 950px, #142930 1060px, #14292a 1120px, #26271a 1170px, #302317 1230px, #2d2218 1380px, #1b3029 1520px, #1c3029 1580px, #282826 1650px, #252525 1920px); }
.weather { width: 574px; display: flex; align-items: center; padding-left: 25px; }
.weather div, .lang, .clock { display: flex; flex-direction: column; }
.weather div { margin-left: 8px; }
.muted { color: #c4cac9; }
.apps { display: flex; height: 100%; }
.apps > span { position: relative; width: 55.100px; display: flex; align-items: center; justify-content: center; }
.apps > span:first-child { width: 56.500px; }
.run::after, .active::after { content: ""; position: absolute; left: 23.500px; bottom: 4px; width: 8px; height: 4px; border-radius: 2px; background: #9a9a9a; }
.active::after { left: 17.500px; width: 20px; background: #dfab9c; }
.active::before { content: ""; position: absolute; left: 3px; top: 3px; width: 44px; height: 50px; border: 1px solid #404040; border-radius: 6px; background: #313131; box-shadow: 5px 0 0 #333; }
.active svg { position: relative; }
.tray { margin-left: auto; display: flex; align-items: center; padding-right: 26px; }
.lang { width: 50px; margin-left: 15px; align-items: center; }
.wifi { margin-left: 12px; }
.vol { margin-left: 8px; }
.bat { margin-left: 8px; }
.clock { width: 81px; align-items: flex-end; margin-right: 10px; letter-spacing: .12px; }
```
